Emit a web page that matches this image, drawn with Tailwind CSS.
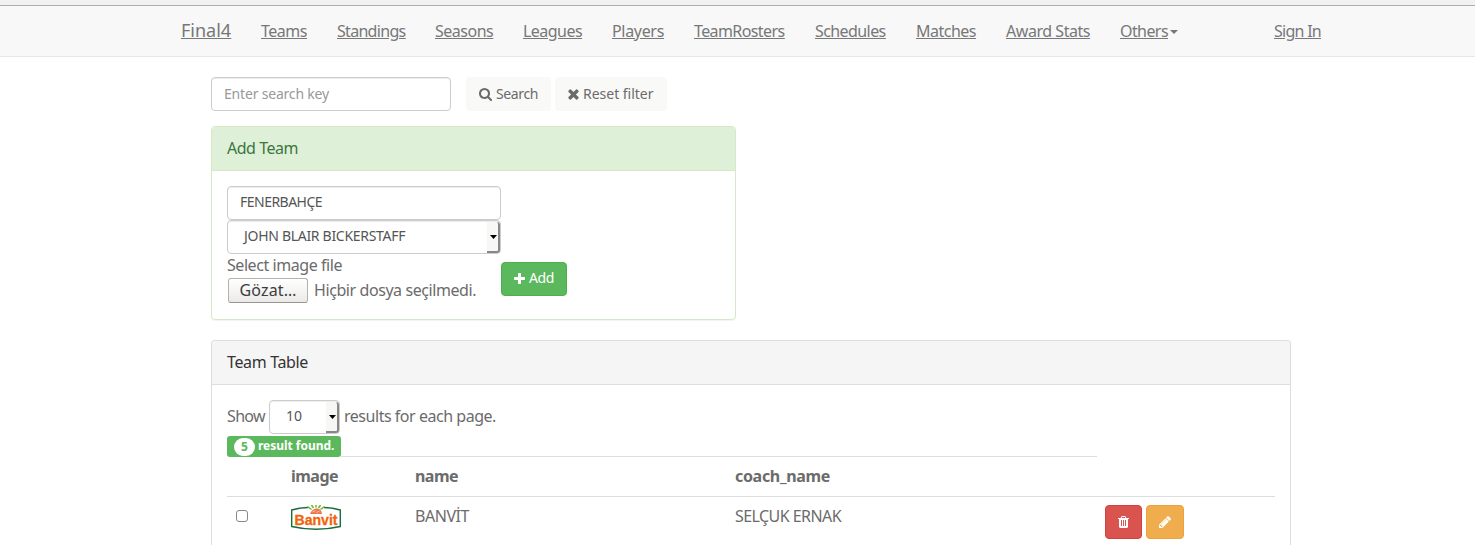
<!DOCTYPE html>
<html lang="en">
<head>
<meta charset="utf-8">
<title>Final4</title>
<script src="https://cdn.jsdelivr.net/npm/@tailwindcss/browser@4"></script>
</head>
<body class="h-[545px] overflow-hidden bg-white font-['Noto_Sans',sans-serif] text-base leading-[22px] whitespace-nowrap text-[#6b6b6b]">
<div class="h-[6px] border-b border-[#aeaeae] bg-[#f2f1f0]"></div>
<nav class="flex h-[51px] border-b border-[#e7e7e7] bg-[#f8f8f8] pt-[14px] pl-[181px] text-[#777] underline">
  <a class="-mt-px mr-[30px] w-[50px] text-[18px]">Final4</a>
  <a class="mr-[30px] w-[46px] tracking-[-0.48px]">Teams</a>
  <a class="mr-[30px] w-[68px] tracking-[-0.7px]">Standings</a>
  <a class="mr-[30px] w-[58px] tracking-[-0.5px]">Seasons</a>
  <a class="mr-[30px] w-[59px] tracking-[-0.54px]">Leagues</a>
  <a class="mr-[30px] w-[52px] tracking-[-0.32px]">Players</a>
  <a class="mr-[30px] w-[91px] tracking-[-0.6px]">TeamRosters</a>
  <a class="mr-[30px] w-[71px] tracking-[-0.58px]">Schedules</a>
  <a class="mr-[30px] w-[60px] tracking-[-0.5px]">Matches</a>
  <a class="mr-[30px] w-[84px] tracking-[-0.46px]">Award Stats</a>
  <a class="w-[50px] tracking-[-0.58px]">Others</a>
  <span class="mt-[10px] h-0 w-0 border-x-4 border-t-4 border-x-transparent border-t-[#777]"></span>
  <a class="ml-24 tracking-[-0.73px]">Sign In</a>
</nav>
<main class="ml-[211px] w-[1080px] pt-5">
  <div class="flex text-sm leading-5">
    <input class="h-[34px] w-[240px] rounded border border-[#ccc] px-3 pb-0.5 tracking-[-0.19px] shadow-[inset_0_1px_1px_rgba(0,0,0,0.075)] placeholder:text-[#999]" placeholder="Enter search key">
    <button class="ml-[15px] flex h-[34px] w-[85px] items-center rounded bg-[#f9f9f8] pl-[13px] tracking-[-0.38px]">
      <svg class="mr-1 h-[13px] w-[13px]" viewBox="0 0 1664 1664" fill="currentColor"><path d="M1152 704q0-185-131.5-316.5t-316.5-131.5-316.5 131.5-131.5 316.5 131.5 316.5 316.5 131.5 316.5-131.5 131.5-316.5zm512 832q0 52-38 90t-90 38q-54 0-90-38l-343-342q-179 124-399 124-143 0-273.5-55.5t-225-150-150-225-55.5-273.5 55.5-273.5 150-225 225-150 273.5-55.5 273.5 55.5 225 150 150 225 55.5 273.5q0 220-124 399l343 343q37 37 37 90z"/></svg>Search
    </button>
    <button class="ml-1 flex h-[34px] w-[112px] items-center rounded bg-[#f9f9f8] pl-[13px] tracking-[-0.02px]">
      <svg class="mr-1 h-[11px] w-[11px]" viewBox="270 206 1252 1252" fill="currentColor"><path d="M1490 1322q0 40-28 68l-136 136q-28 28-68 28t-68-28l-294-294-294 294q-28 28-68 28t-68-28l-136-136q-28-28-28-68t28-68l294-294-294-294q-28-28-28-68t28-68l136-136q28-28 68-28t68 28l294 294 294-294q28-28 68-28t68 28l136 136q28 28 28 68t-28 68l-294 294 294 294q28 28 28 68z" transform="translate(0 -128)"/></svg>Reset filter
    </button>
  </div>

  <section class="mt-[15px] h-[194px] w-[525px] rounded border border-[#d6e9c6] shadow-[0_1px_1px_rgba(0,0,0,0.05)]">
    <h3 class="h-[44px] rounded-t-[3px] border-b border-[#d6e9c6] bg-[#dff0d8] px-[15px] pt-[10px] tracking-[-0.48px] text-[#3c763d]">Add Team</h3>
    <div class="flex px-[15px] pt-[15px]">
      <div class="w-[274px]">
        <input class="block h-[34px] w-full rounded border border-[#ccc] px-3 pb-1 text-sm tracking-[-0.52px] text-[#555] shadow-[inset_0_1px_1px_rgba(0,0,0,0.075)]" value="FENERBAHÇE">
        <div class="flex h-[34px] items-center justify-between rounded border border-[#ccc] pl-4 text-sm text-[#555] shadow-[inset_0_1px_1px_rgba(0,0,0,0.075)]">
          <span class="-mt-0.5 tracking-[-0.3px]">JOHN BLAIR BICKERSTAFF</span>
          <span class="flex h-[31px] w-[13px] items-center rounded-r-[3px] border-r-2 border-b-2 border-[#888] bg-[#f7f7f6] pt-0.5 pl-[3px]"><svg class="h-1 w-[7px] shrink-0" viewBox="0 0 7 4"><path d="M0 0h7L3.500 4z"/></svg></span>
        </div>
        <div class="tracking-[-0.44px]">Select image file</div>
        <div class="mt-0.5 flex items-center">
          <button class="ml-px h-[25px] w-20 rounded-[3px] border border-[#b5b2ad] border-b-[#979590] bg-linear-to-b from-white to-[#ebeae8] pb-0.5 leading-[22px] tracking-[0.15px] text-[#3c3c3c]">Gözat…</button>
          <span class="-mt-0.5 ml-[6px] tracking-[-0.42px]">Hiçbir dosya seçilmedi.</span>
        </div>
      </div>
      <button class="mt-[76px] flex h-[34px] w-[66px] items-center rounded border border-[#4cae4c] bg-[#5cb85c] pb-0.5 pl-3 text-sm tracking-[-0.39px] text-white">
        <svg class="mr-1 h-[11px] w-[11px]" viewBox="192 128 1408 1408" fill="currentColor"><path d="M1600 736v192q0 40-28 68t-68 28h-416v416q0 40-28 68t-68 28h-192q-40 0-68-28t-28-68v-416h-416q-40 0-68-28t-28-68v-192q0-40 28-68t68-28h416v-416q0-40 28-68t68-28h192q40 0 68 28t28 68v416h416q40 0 68 28t28 68z"/></svg>Add
      </button>
    </div>
  </section>

  <section class="mt-5 h-[205px] rounded-t border border-b-0 border-[#ddd]">
    <h3 class="h-[44px] rounded-t-[3px] border-b border-[#ddd] bg-[#f5f5f5] px-[15px] pt-[10px] tracking-[-0.35px] text-[#333]">Team Table</h3>
    <div class="px-[15px] pt-[15px]">
      <div class="flex h-[34px] items-center">
        <span class="-mt-0.5 w-[42px] tracking-[-0.65px]">Show</span>
        <div class="flex h-[34px] w-[71px] items-center justify-between rounded border border-[#ccc] pl-4 text-sm text-[#555] shadow-[inset_0_1px_1px_rgba(0,0,0,0.075)]">
          <span class="-mt-0.5">10</span>
          <span class="flex h-[31px] w-[13px] items-center rounded-r-[3px] border-r-2 border-b-2 border-[#888] bg-[#f7f7f6] pt-0.5 pl-[3px]"><svg class="h-1 w-[7px] shrink-0" viewBox="0 0 7 4"><path d="M0 0h7L3.500 4z"/></svg></span>
        </div>
        <span class="-mt-0.5 ml-1 tracking-[-0.47px]">results for each page.</span>
      </div>
      <div class="mt-0.5 flex h-[21px] items-end">
        <span class="flex h-[21px] w-[114px] items-center rounded-[3px] bg-[#5cb85c] pl-[7px] text-xs leading-4 font-bold text-white"><span class="mt-px mr-[3px] flex h-[18px] w-[21px] items-center justify-center rounded-full bg-white text-[#5cb85c]">5</span><span class="-mt-0.5 tracking-[-0.03px]">result found.</span></span>
        <span class="h-px w-[756px] bg-[#ddd]"></span>
      </div>
      <div class="flex h-10 border-b border-[#ddd] pt-2 pl-16 font-bold">
        <span class="w-[124px] tracking-[-0.53px]">image</span>
        <span class="w-[320px] tracking-[-0.53px]">name</span>
        <span class="tracking-[-0.32px]">coach_name</span>
      </div>
      <div class="flex pt-2">
        <span class="mt-[5px] mr-[43px] ml-[9px] h-3 w-3 rounded-[3px] border border-[#8b8985] bg-white"></span>
        <svg class="h-[25px] w-[50px]" viewBox="0 0 50 25">
          <path d="M17 2.500Q8 2.800 .7 5v16.500q12 2.800 24.300 2.800t24.300-2.800V5Q42 2.800 33 2.500" fill="#fff" stroke="#176d3c" stroke-width="1.400"/>
          <path d="M16.500 1.500l4 3M20.500 0l2 3M25 0v2.500M29.500 0l-2 3M33.500 1.500l-4 3" stroke="#6cb52d" stroke-width="1.500"/>
          <path d="M19 9c1-3 4-6 7-5.500 3 0 5 2.500 5 5.500z" fill="#ed7852"/><path d="M21.500 7l3-1.500m1 2l3-1.500" stroke="#ffc39d"/>
          <text x="3.500" y="19.500" textLength="43" lengthAdjust="spacingAndGlyphs" font-family="Liberation Sans" font-weight="bold" font-size="15.500" fill="#f0640a" stroke="#f0640a" stroke-width=".3">Banvit</text>
        </svg>
        <span class="ml-[74px] w-[320px] tracking-[-0.45px]">BANVİT</span>
        <span class="w-[370px] tracking-[-0.56px]">SELÇUK ERNAK</span>
        <button class="flex h-[34px] w-[37px] items-center justify-center rounded border border-[#d43f3a] bg-[#d9534f] text-white"><svg class="h-3 w-[11px]" viewBox="192 128 1408 1536" preserveAspectRatio="none" fill="currentColor"><path d="M704 1376v-704q0-14-9-23t-23-9h-64q-14 0-23 9t-9 23v704q0 14 9 23t23 9h64q14 0 23-9t9-23zm256 0v-704q0-14-9-23t-23-9h-64q-14 0-23 9t-9 23v704q0 14 9 23t23 9h64q14 0 23-9t9-23zm256 0v-704q0-14-9-23t-23-9h-64q-14 0-23 9t-9 23v704q0 14 9 23t23 9h64q14 0 23-9t9-23zm-544-992h448l-48-117q-7-9-17-11h-317q-10 2-17 11zm928 32v64q0 14-9 23t-23 9h-96v948q0 83-47 143.500t-113 60.500h-832q-66 0-113-58.500t-47-141.500v-952h-96q-14 0-23-9t-9-23v-64q0-14 9-23t23-9h309l70-167q15-37 54-63t79-26h320q40 0 79 26t54 63l70 167h309q14 0 23 9t9 23z"/></svg></button>
        <button class="ml-1 flex h-[34px] w-[38px] items-center justify-center rounded border border-[#eea236] bg-[#f0ad4e] text-white"><svg class="h-3 w-3" viewBox="128 128 1515 1536" fill="currentColor"><path d="M491 1536l91-91-235-235-91 91v107h128v128h107zm523-928q0-22-22-22-10 0-17 7l-542 542q-7 7-7 17 0 22 22 22 10 0 17-7l542-542q7-7 7-17zm-54-192l416 416-832 832h-416v-416zm683 96q0 53-37 90l-166 166-416-416 166-165q36-38 90-38 53 0 91 38l235 234q37 39 37 91z"/></svg></button>
      </div>
    </div>
  </section>
</main>
</body>
</html>
